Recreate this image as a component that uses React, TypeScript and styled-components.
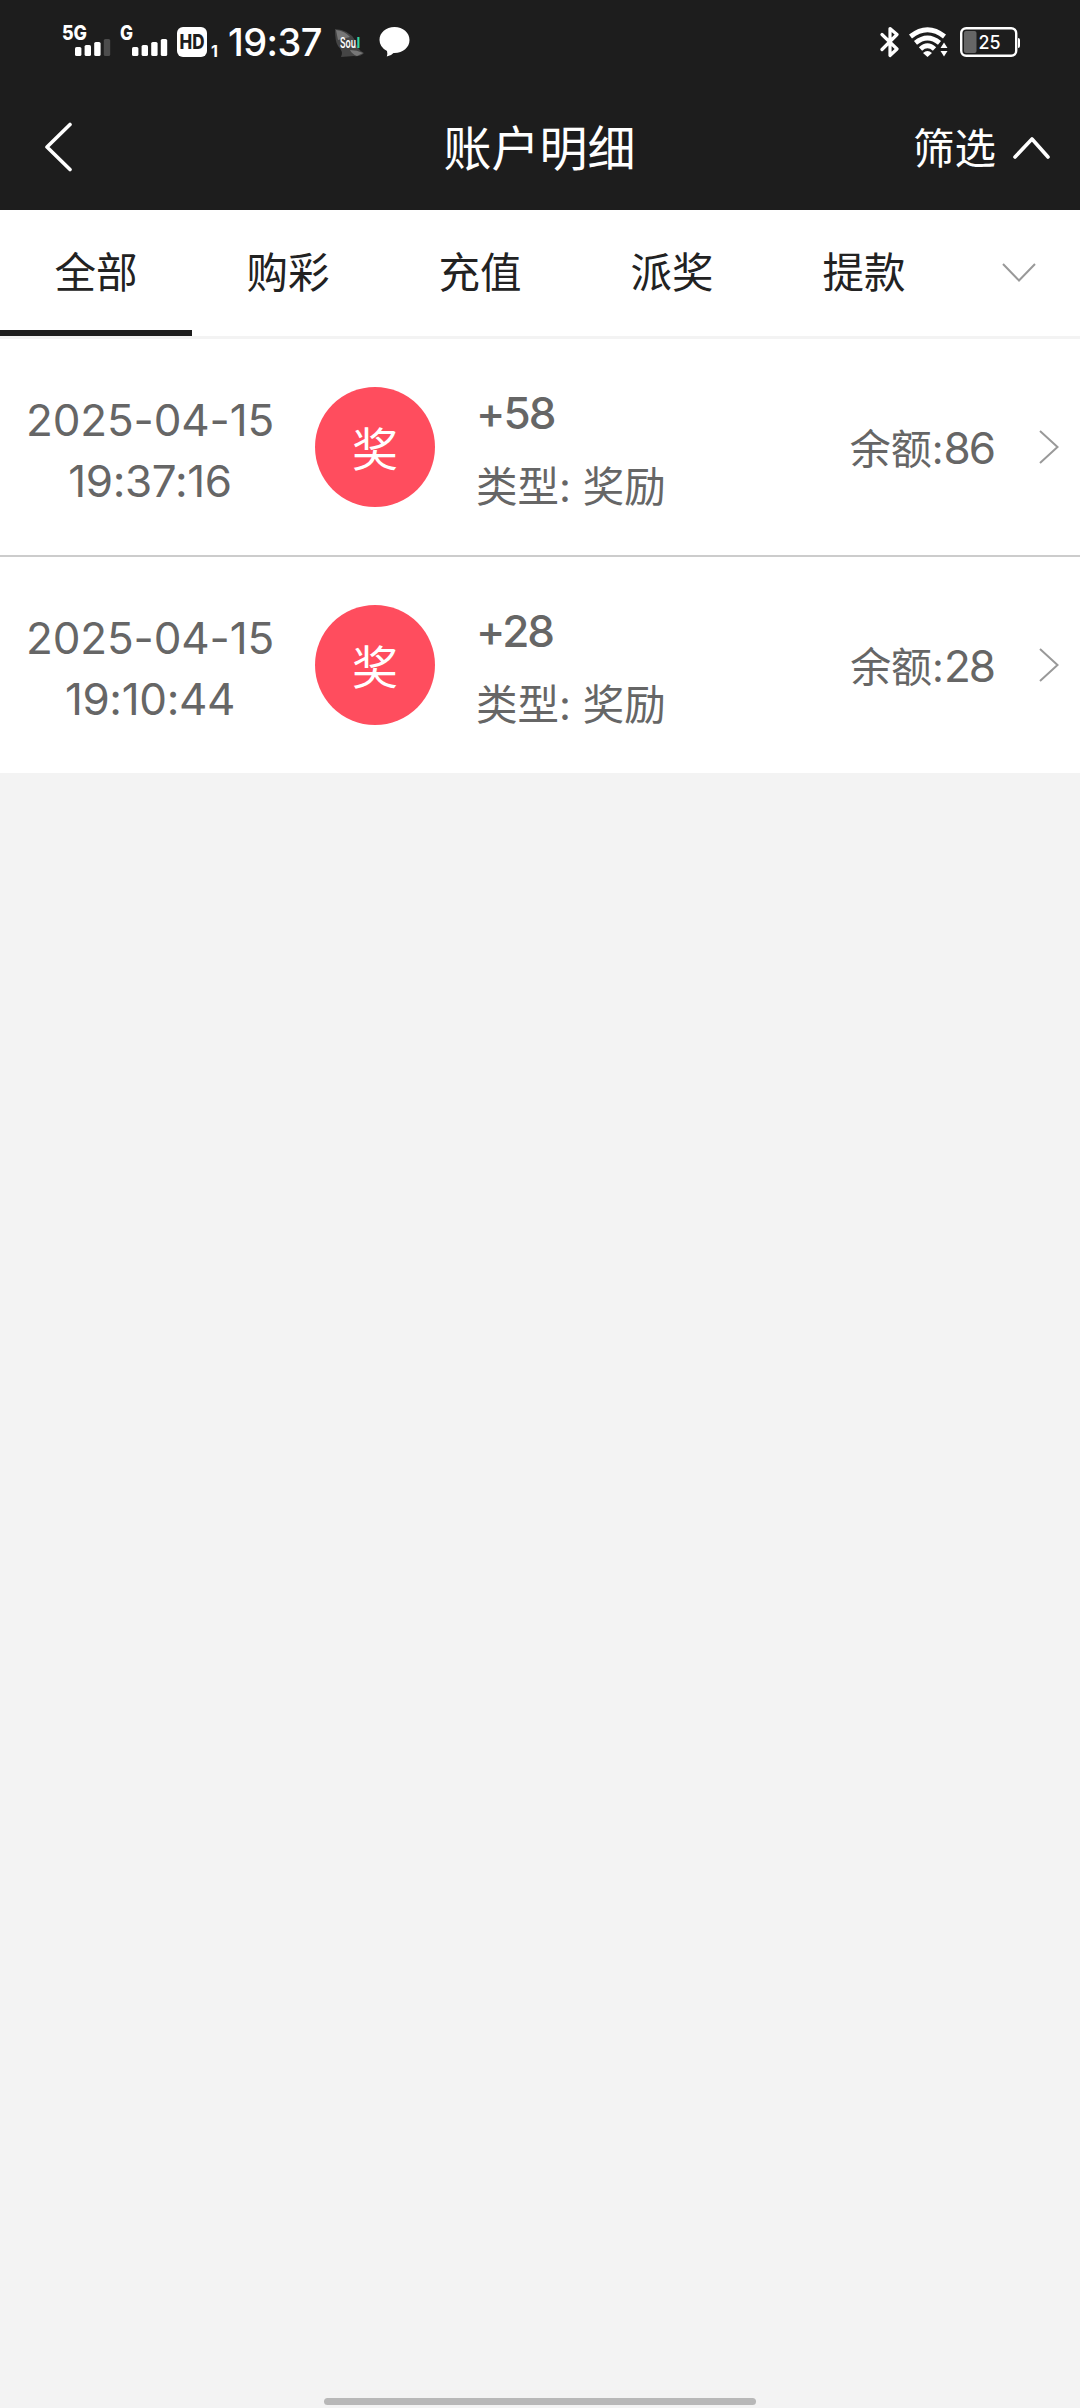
import React from "react";
import styled, { createGlobalStyle } from "styled-components";

const Global = createGlobalStyle`
  * { box-sizing: border-box; }
  body {
    margin: 0;
    background: #f3f3f3;
    font-family: Inter, "Noto Sans CJK SC", sans-serif;
    -webkit-font-smoothing: antialiased;
  }
`;

const Page = styled.div`
  display: flex;
  flex-direction: column;
  width: 1080px;
  min-height: 2408px;
  background: #f3f3f3;
`;

const StatusBar = styled.div`
  display: flex;
  justify-content: space-between;
  align-items: center;
  height: 84px;
  padding: 0 59px 0 60px;
  background: #1d1d1d;
  color: #fff;
`;

const StatusGroup = styled.div`
  display: flex;
  align-items: center;
`;

const Glyph = styled.svg<{ $gap?: number }>`
  display: block;
  flex: none;
  margin-left: ${(p) => p.$gap ?? 0}px;
`;

const Clock = styled.span`
  width: 99px;
  margin-left: 8px;
  font-size: 38px;
  line-height: 40px;
  font-weight: 500;
  letter-spacing: -0.6px;
  white-space: nowrap;
`;

const NavBar = styled.header`
  display: grid;
  grid-template-columns: 240px 1fr 240px;
  align-items: center;
  height: 126px;
  padding: 0 30px 0 44px;
  background: #1d1d1d;
  color: #fff;
`;

const Title = styled.h1`
  margin: 0;
  padding: 4px 15px 0 0;
  text-align: center;
  font-size: 48px;
  line-height: 60px;
  font-weight: 400;
`;

const Filter = styled.div`
  display: flex;
  justify-content: flex-end;
  align-items: center;
  gap: 16px;
  font-size: 41.5px;
  line-height: 54px;
`;

const FilterLabel = styled.span`
  padding-top: 4px;
`;

const Tabs = styled.nav`
  display: flex;
  height: 129px;
  background: #fff;
  border-bottom: 3px solid #f3f3f3;
`;

const Tab = styled.div<{ $active?: boolean }>`
  display: flex;
  align-items: center;
  justify-content: center;
  width: 192px;
  padding-bottom: 1px;
  border-bottom: 6px solid ${(p) => (p.$active ? "#1d1d1d" : "transparent")};
  font-size: 41.5px;
  color: #222;
`;

const More = styled.div`
  display: flex;
  flex: 1;
  align-items: center;
  justify-content: center;
  padding-right: 2px;
`;

const Row = styled.article<{ $last?: boolean }>`
  display: grid;
  grid-template-columns: 302px 120px 1fr auto 20px;
  align-items: center;
  height: ${(p) => (p.$last ? 216 : 218)}px;
  padding-right: 21px;
  background: #fff;
  border-bottom: ${(p) => (p.$last ? "0" : "2px solid #ccc")};
  color: #666;
`;

const When = styled.div`
  display: flex;
  flex-direction: column;
  align-items: center;
  padding: 7px 2px 0 0;
  font-size: 44px;
  line-height: 61px;
`;

const Stamp = styled.span<{ $track: number }>`
  letter-spacing: ${(p) => p.$track}px;
`;

const Badge = styled.div`
  display: flex;
  align-items: center;
  justify-content: center;
  width: 120px;
  height: 120px;
  margin-left: 13px;
  padding-top: 3px;
  border-radius: 50%;
  background: #ff4d5e;
  color: #fff;
  font-size: 46px;
  line-height: 60px;
`;

const Detail = styled.div`
  display: flex;
  flex-direction: column;
  padding: 5px 0 0 54px;
`;

const Amount = styled.strong`
  font-size: 44px;
  line-height: 60px;
  font-weight: 500;
  letter-spacing: -1.9px;
`;

const Kind = styled.span`
  margin-top: 14px;
  font-size: 41.5px;
  line-height: 60px;
`;

const Balance = styled.div`
  padding: 3px 45px 0 0;
  font-size: 41px;
  line-height: 60px;
`;

const Digits = styled.span`
  font-size: 44px;
  letter-spacing: -2px;
`;

const HomeArea = styled.footer`
  display: flex;
  justify-content: center;
  margin-top: auto;
  padding-bottom: 3px;
`;

const HomeBar = styled.div`
  width: 432px;
  height: 7px;
  border-radius: 4px;
  background: #b8b8b8;
`;

interface SignalProps {
  label: string;
  width: number;
  start: number;
  dimLast?: boolean;
  gap?: number;
}

const Signal = ({ label, width, start, dimLast, gap }: SignalProps) => (
  <Glyph $gap={gap} width={width} height="40" viewBox={`0 0 ${width} 40`}>
    <text x="2" y="18" fill="#fff" fontSize="20" fontWeight="800" textLength={label.length > 1 ? 25 : 13} lengthAdjust="spacingAndGlyphs">
      {label}
    </text>
    {[9, 11, 14, 17].map((h, i) => (
      <rect
        key={h}
        x={start + i * 9.6}
        y={34 - h}
        width="6.4"
        height={h}
        rx="1.6"
        fill={dimLast && i === 3 ? "#4c4c4c" : "#fff"}
      />
    ))}
  </Glyph>
);

const HdBadge = () => (
  <Glyph $gap={9} width="43" height="40" viewBox="0 0 43 40">
    <rect x="0" y="5" width="30" height="30" rx="6" fill="#fff" />
    <text x="2.500" y="27" fill="#1d1d1d" fontSize="19.500" fontWeight="800" textLength="25" lengthAdjust="spacingAndGlyphs">
      HD
    </text>
    <text x="34" y="34.5" fill="#fff" fontSize="16" fontWeight="700">
      1
    </text>
  </Glyph>
);

const SoulIcon = () => (
  <Glyph $gap={8} width="30" height="40" viewBox="0 0 30 40">
    <path d="M0 7Q14 8 20 18Q22 28 29 31Q25 35 19 34L6 35Q9 30 3 24Q0 20 0 7Z" fill="#454545" />
    <path d="M1 8Q10 9 15 15L3 18ZM15 28Q22 28 28 31L22 34Q17 32 15 28Z" fill="#777" />
    <text x="5" y="25.500" fill="#fff" fontSize="14" fontWeight="600" textLength="16" lengthAdjust="spacingAndGlyphs">
      Sou
    </text>
    <text x="21.500" y="25.500" fill="#35d6a0" fontSize="14" fontWeight="700">
      l
    </text>
  </Glyph>
);

const ChatIcon = () => (
  <Glyph $gap={14} width="31" height="40" viewBox="0 0 31 40">
    <path d="M15.5 5C24 5 30.5 10.600 30.500 18S24 31 15.500 31H14.500Q12 34 7.800 34.500Q8.800 32 8 29Q.5 25 .5 18C.5 10.600 7 5 15.500 5Z" fill="#fff" />
  </Glyph>
);

const BluetoothIcon = () => (
  <Glyph width="20" height="40" viewBox="0 0 20 40">
    <path d="M2 12.500 17 27 10 33.500V6.500L17 12.500 2 27.500" fill="none" stroke="#fff" strokeWidth="3.200" strokeLinejoin="round" strokeLinecap="round" />
  </Glyph>
);

const WifiIcon = () => (
  <Glyph $gap={9} width="40" height="40" viewBox="0 0 40 40">
    <g fill="none" stroke="#fff" strokeWidth="4.800">
      <path d="M1.500 14.500Q18.500 1 35.500 14.500" />
      <path d="M6.500 20.800Q18.500 11 30.500 20.800" />
      <path d="M11.500 27Q18.500 20.500 25.500 27" />
    </g>
    <path d="M14 31Q18.500 27 23 31L18.500 35Z" fill="#fff" />
    <path d="M31.500 26 35 20.500 38.500 26ZM31.500 29H38.500L35 34.500Z" fill="#fff" />
  </Glyph>
);

const BatteryIcon = () => (
  <Glyph $gap={11} width="61" height="40" viewBox="0 0 61 40">
    <rect x="1.200" y="6.200" width="55" height="27.600" rx="5" fill="none" stroke="#fff" strokeWidth="2.400" />
    <rect x="4" y="9" width="12.500" height="22" rx="2" fill="#666" />
    <path d="M58 16Q60 16 60 18V24Q60 26 58 26Z" fill="#fff" />
    <text x="18.500" y="27" fill="#fff" fontSize="19" fontWeight="500" textLength="22" lengthAdjust="spacingAndGlyphs">
      25
    </text>
  </Glyph>
);

interface ChevronProps {
  width: number;
  height: number;
  points: string;
  color: string;
  weight: number;
  round?: boolean;
}

const Chevron = ({ width, height, points, color, weight, round }: ChevronProps) => (
  <Glyph width={width} height={height} viewBox={`0 0 ${width} ${height}`}>
    <polyline
      points={points}
      fill="none"
      stroke={color}
      strokeWidth={weight}
      strokeLinecap={round ? "round" : "butt"}
      strokeLinejoin={round ? "round" : "miter"}
    />
  </Glyph>
);

const tabs = ["全部", "购彩", "充值", "派奖", "提款"];

const records = [
  { date: "2025-04-15", time: "19:37:16", amount: "+58", balance: "86" },
  { date: "2025-04-15", time: "19:10:44", amount: "+28", balance: "28" },
];

export default function App() {
  return (
    <Page>
      <Global />
      <StatusBar>
        <StatusGroup>
          <Signal label="5G" width={51} start={15} dimLast />
          <Signal label="G" width={50} start={14} gap={7} />
          <HdBadge />
          <Clock>19:37</Clock>
          <SoulIcon />
          <ChatIcon />
        </StatusGroup>
        <StatusGroup>
          <BluetoothIcon />
          <WifiIcon />
          <BatteryIcon />
        </StatusGroup>
      </StatusBar>
      <NavBar>
        <Chevron width={30} height={50} points="26,2.500 3,25 26,47.500" color="#fff" weight={3.6} round />
        <Title>账户明细</Title>
        <Filter>
          <FilterLabel>筛选</FilterLabel>
          <Chevron width={38} height={24} points="3,22 20,4 36,22" color="#fff" weight={3.6} round />
        </Filter>
      </NavBar>
      <Tabs>
        {tabs.map((t, i) => (
          <Tab key={t} $active={i === 0}>
            {t}
          </Tab>
        ))}
        <More>
          <Chevron width={34} height={20} points="1,1 17,17.500 33,1" color="#999" weight={2} />
        </More>
      </Tabs>
      {records.map((r, i) => (
        <Row key={r.time} $last={i === records.length - 1}>
          <When>
            <Stamp $track={-0.15}>{r.date}</Stamp>
            <Stamp $track={-0.35}>{r.time}</Stamp>
          </When>
          <Badge>奖</Badge>
          <Detail>
            <Amount>{r.amount}</Amount>
            <Kind>类型: 奖励</Kind>
          </Detail>
          <Balance>
            余额:<Digits>{r.balance}</Digits>
          </Balance>
          <Chevron width={20} height={34} points="1,1 18.500,17 1,33" color="#999" weight={2} />
        </Row>
      ))}
      <HomeArea>
        <HomeBar />
      </HomeArea>
    </Page>
  );
}
